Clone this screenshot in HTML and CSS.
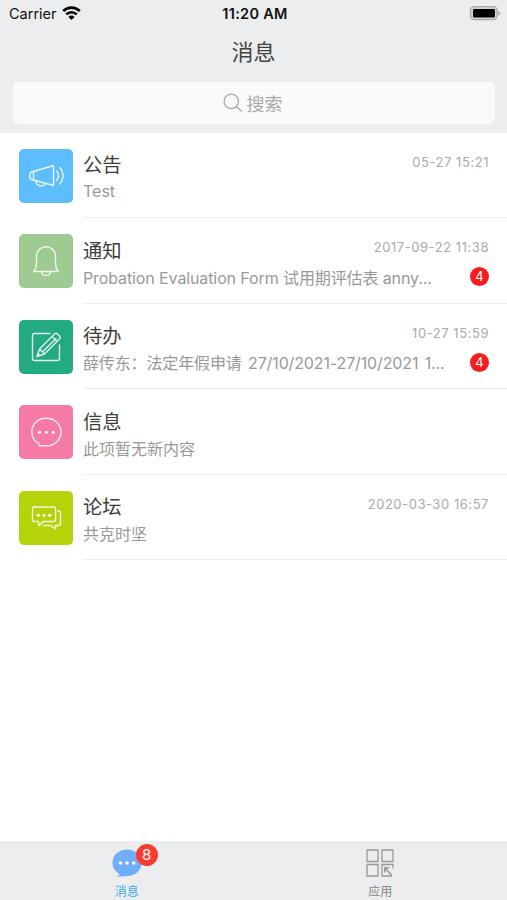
FILE: index.html
```
<!DOCTYPE html>
<html lang="zh-CN">
<head>
    <meta charset="UTF-8">
    <meta name="viewport" content="width=device-width, initial-scale=1.0">
    <title>消息</title>
    <link rel="stylesheet" href="styles.css">
</head>
<body>
    <div class="app">
        <!-- Header -->
        <header class="header">
            <div class="status-bar">
                <div class="carrier">
                    <span>Carrier</span>
                    <svg class="wifi" width="19" height="14" viewBox="0 0 19 14">
                        <path d="M1.2 5a11.8 11.8 0 0 1 16.6 0M4.2 8.4a7.6 7.6 0 0 1 10.6 0" fill="none" stroke="#000" stroke-width="2.6"/>
                        <path d="M9.5 14L6.4 10.9a4.4 4.4 0 0 1 6.2 0z"/>
                    </svg>
                </div>
                <div class="clock">11:20 AM</div>
                <div class="battery">
                    <svg width="32" height="16" viewBox="0 0 32 16">
                        <rect x="1.5" y="1.7" width="26.5" height="13" rx="3.6" fill="#d3d4d4" stroke="#a5a6a6" stroke-width="1.2"/>
                        <rect x="4" y="4" width="22" height="8.6" rx="1.4"/>
                        <path d="M29.3 5.9c2.4 1 2.4 3.8 0 4.8z" fill="#a5a6a6"/>
                    </svg>
                </div>
            </div>
            <h1 class="title">消息</h1>
            <div class="search">
                <svg width="20" height="20" viewBox="0 0 20 20" fill="none" stroke="#aaa" stroke-width="1.4">
                    <circle cx="8.3" cy="8.3" r="7.2"/>
                    <path d="M13.4 13.4l5.4 5.2"/>
                </svg>
                <span>搜索</span>
            </div>
        </header>

        <!-- Message list -->
        <main class="list">
            <div class="item">
                <div class="icon blue">
                    <svg width="54" height="54" viewBox="0 0 54 54">
                        <path d="M14.5 22.5L34.5 16.5V36.5L14.5 31C9.5 31 9.5 22.5 14.5 22.5zM14.5 22.5V31M17 32c0 6 9 6 9.5 2.5"/>
                        <path d="M37.5 22q4 5 0 9.5M41 18.5q6 8 0 16.5"/>
                    </svg>
                </div>
                <div class="content">
                    <div class="line"><h2>公告</h2><time>05-27 15:21</time></div>
                    <div class="line"><p>Test</p></div>
                </div>
            </div>
            <div class="item">
                <div class="icon green">
                    <svg width="54" height="54" viewBox="0 0 54 54">
                        <path d="M14.5 37.5C17 35 17.5 32 17.5 28V22.5C17.5 9.5 36.5 9.5 36.5 22.5V28C36.5 32 37 35 39.5 37.5zM22.5 37.8c1 5 8 5 9 0"/>
                    </svg>
                </div>
                <div class="content">
                    <div class="line"><h2>通知</h2><time>2017-09-22 11:38</time></div>
                    <div class="line"><p class="form-text">Probation Evaluation Form 试用期评估表 anny...</p><span class="badge">4</span></div>
                </div>
            </div>
            <div class="item">
                <div class="icon teal">
                    <svg width="54" height="54" viewBox="0 0 54 54">
                        <path d="M31 13.5H15.5q-2 0-2 2V38.5q0 2 2 2H38.5q2 0 2-2V25"/>
                        <path d="M18 36.5L20.5 29L35.5 14Q37 12.5 38.5 14L40.5 16Q42 17.5 40.5 19L25.5 34zM20.5 29L25.5 34M24 31.5L37 18.5M33 16.5L38 21.5M18.8 33.5L21 35.5"/>
                    </svg>
                </div>
                <div class="content">
                    <div class="line"><h2>待办</h2><time>10-27 15:59</time></div>
                    <div class="line"><p class="leave-text">薛传东：法定年假申请 27/10/2021-27/10/2021 1...</p><span class="badge">4</span></div>
                </div>
            </div>
            <div class="item">
                <div class="icon pink">
                    <svg width="54" height="54" viewBox="0 0 54 54">
                        <path d="M20 40.8H27C36 40.8 42 34.5 42 27C42 19 35.5 13.3 27.3 13.3C19 13.3 12.8 19 12.8 27C12.8 32 15.5 36.5 20.5 38.8"/>
                        <g class="dots"><circle cx="20.5" cy="27.3" r="1.5"/><circle cx="27.3" cy="27.3" r="1.5"/><circle cx="34.2" cy="27.3" r="1.5"/></g>
                    </svg>
                </div>
                <div class="content">
                    <div class="line"><h2>信息</h2></div>
                    <div class="line"><p>此项暂无新内容</p></div>
                </div>
            </div>
            <div class="item">
                <div class="icon lime">
                    <svg width="54" height="54" viewBox="0 0 54 54">
                        <path d="M15.5 16H34.5q2 0 2 2V28.5q0 2-2 2H24L20 34.8L19.5 30.5H15.5q-2 0-2-2V18q0-2 2-2z"/>
                        <path d="M38.5 20H39.5q2 0 2 2V32.5q0 2-2 2H36.5V38L31.5 34.5H24.5"/>
                        <g class="dots"><circle cx="19.3" cy="24.2" r="1.5"/><circle cx="25" cy="24.2" r="1.5"/><circle cx="30.7" cy="24.2" r="1.5"/></g>
                    </svg>
                </div>
                <div class="content">
                    <div class="line"><h2>论坛</h2><time>2020-03-30 16:57</time></div>
                    <div class="line"><p>共克时坚</p></div>
                </div>
            </div>
        </main>

        <!-- Tab bar -->
        <nav class="tabs">
            <div class="tab active">
                <div class="tab-icon">
                    <svg width="30" height="30" viewBox="0 0 30 30">
                        <path d="M15 1.5C23 1.5 29.5 7 29.5 14.5C29.5 23 23 28 15 28C11.5 28.5 9 28.8 5 28.5C7 27.5 7.5 26.5 7.5 26C3 23.5 .5 19.5 .5 14.5C.5 7 7 1.5 15 1.5z" fill="#70adfb"/>
                        <g fill="#fff"><circle cx="8.5" cy="15" r="1.8"/><circle cx="15" cy="15" r="1.8"/><circle cx="21.8" cy="15" r="1.8"/></g>
                    </svg>
                    <span class="tab-badge">8</span>
                </div>
                <span>消息</span>
            </div>
            <div class="tab">
                <div class="tab-icon">
                    <svg width="30" height="30" viewBox="0 0 30 30" fill="none" stroke="#999" stroke-width="1.3">
                        <path d="M2 2H13V13.5H2zM17 2H28V13.5H17zM2 16.5H13V28H2zM28 20.5V16.5H17V28H27"/>
                        <path d="M19.8 24.5V19.8H24.5M20.3 20.2L27 27.8" stroke-width="1.6"/>
                    </svg>
                </div>
                <span>应用</span>
            </div>
        </nav>
    </div>
</body>
</html>
```
FILE: styles.css
```
body {
    margin: 0;
    font-family: Inter, "Noto Sans CJK SC", sans-serif;
    background-color: #fff;
}

.app {
    display: flex;
    flex-direction: column;
    height: 900px;
    overflow: hidden;
}

.header {
    height: 132.5px;
    background-color: #ebedee;
}

.status-bar {
    display: grid;
    grid-template-columns: 1fr auto 1fr;
    align-items: center;
    height: 27px;
    padding: 0 6px 0 9px;
    font-size: 14.5px;
    color: #111;
}

.carrier {
    display: flex;
    align-items: center;
    gap: 5px;
}

.wifi {
    margin-top: -2px;
}

.clock {
    font-weight: 600;
    letter-spacing: 0.3px;
}

.battery {
    display: flex;
    justify-content: flex-end;
    margin-top: -1px;
}

.title {
    margin: 0;
    height: 55px;
    line-height: 50px;
    font-size: 22px;
    font-weight: 400;
    text-align: center;
    color: #444;
}

.search {
    display: flex;
    align-items: center;
    justify-content: center;
    gap: 4px;
    box-sizing: border-box;
    height: 42px;
    margin: 0 12px 0 13px;
    padding-right: 3px;
    border-radius: 5px;
    background-color: #fafafa;
    font-size: 18px;
    color: #aaa;
}

.list {
    flex: 1;
}

.item {
    display: flex;
    height: 85.5px;
    padding-left: 19px;
}

.icon {
    width: 54px;
    height: 54px;
    margin-top: 16px;
    border-radius: 5px;
    overflow: hidden;
}

.icon svg {
    display: block;
    fill: none;
    stroke: #fff;
    stroke-opacity: 0.85;
    stroke-width: 1.4;
    stroke-linejoin: round;
    stroke-linecap: round;
}

.icon .dots {
    fill: #fff;
    stroke: none;
}

.blue {
    background-color: #5dbdff;
}

.green {
    background-color: #9fca91;
}

.teal {
    background-color: #23aa82;
}

.pink {
    background-color: #f67aa6;
}

.lime {
    background-color: #b5d20b;
}

.content {
    flex: 1;
    box-sizing: border-box;
    margin-left: 10px;
    padding: 18px 18px 0 0;
    border-bottom: 1.5px solid #eee;
}

.line {
    display: flex;
    align-items: center;
    justify-content: space-between;
    height: 27px;
    white-space: nowrap;
}

.line h2 {
    margin: 0;
    font-size: 19.3px;
    font-weight: 400;
    color: #3c3c3c;
}

.line time {
    margin-top: -5px;
    font-size: 13px;
    letter-spacing: 0.55px;
    color: #aaa;
}

.line p {
    margin: 0;
    font-size: 16px;
    color: #999;
}

.line .form-text {
    letter-spacing: -0.11px;
}

.line .leave-text {
    letter-spacing: -0.13px;
    word-spacing: 2px;
}

.badge {
    width: 19px;
    height: 19px;
    border-radius: 50%;
    background-color: #fb1c20;
    font-size: 13px;
    line-height: 19px;
    text-align: center;
    color: #fff;
}

.tabs {
    display: flex;
    height: 59.5px;
    background-color: #ebedee;
}

.tab {
    flex: 1;
    display: flex;
    flex-direction: column;
    align-items: center;
    padding-top: 7px;
    font-size: 12px;
    line-height: 18px;
    color: #888;
}

.tab-icon {
    position: relative;
    height: 35px;
}

.tab.active {
    color: #38a8e8;
}

.tab-badge {
    position: absolute;
    top: -4px;
    left: 24px;
    width: 22px;
    height: 22px;
    border-radius: 50%;
    background-color: #fc3b30;
    font-size: 15px;
    line-height: 22px;
    text-align: center;
    color: #fff;
}
```
